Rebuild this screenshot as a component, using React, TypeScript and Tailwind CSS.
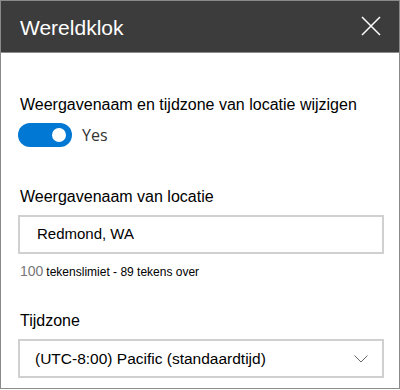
import React from "react";

const App: React.FC = () => {
    return (
        <div
            className="w-[400px] h-[389px] border border-[#8a8a8a] bg-white flex flex-col overflow-hidden"
            style={{ fontFamily: '"Liberation Sans", Arial, sans-serif' }}
        >
            <div className="h-[52px] bg-[#3c3c3c] border-b border-[#8a8a8a] flex items-center justify-between pl-[19px] pr-[18px] shrink-0">
                <span className="text-white text-[21px] leading-none mt-[2px]">Wereldklok</span>
                <svg width="20" height="20" viewBox="0 0 20 20" className="mt-[-2px]">
                    <path d="M1 1 L19 19 M19 1 L1 19" stroke="#ffffff" strokeWidth="1.5" fill="none" />
                </svg>
            </div>

            <div className="pl-[17px] pr-[15px] flex flex-col">
                <div className="mt-[42px] ml-[2px] text-[16px] leading-[20px] text-black">
                    Weergavenaam en tijdzone van locatie wijzigen
                </div>
                <div className="mt-[8px] flex items-center">
                    <div className="w-[54px] h-[24px] rounded-full bg-[#0078d4] flex items-center justify-end pr-[6px]">
                        <div className="w-[14px] h-[14px] rounded-full bg-white" />
                    </div>
                    <span
                        className="ml-[10px] text-[16px] text-[#333333]"
                        style={{ fontFamily: '"Open Sans", "Noto Sans", sans-serif' }}
                    >
                        Yes
                    </span>
                </div>

                <div className="mt-[40px] ml-[2px] text-[16px] leading-[20px] text-black">Weergavenaam van locatie</div>
                <div className="mt-[8px] h-[39px] border-2 border-[#d0d0d0] flex items-center pl-[17px] text-[15px] text-black">
                    Redmond, WA
                </div>
                <div className="mt-[7px] ml-[2px] flex items-baseline">
                    <span className="text-[14px] text-[#777777]">100</span>
                    <span className="ml-[3px] text-[12px] text-black">tekenslimiet - 89 tekens over</span>
                </div>

                <div className="mt-[29px] ml-[2px] text-[16px] leading-[20px] text-black">Tijdzone</div>
                <div className="mt-[8px] h-[39px] border-2 border-[#d0d0d0] flex items-center justify-between pl-[15px] pr-[14px] text-[15.5px] text-black">
                    <span>(UTC-8:00) Pacific (standaardtijd)</span>
                    <svg width="14" height="8" viewBox="0 0 14 8">
                        <path d="M0.5 0.5 L7 7 L13.5 0.5" stroke="#666666" strokeWidth="1" fill="none" />
                    </svg>
                </div>
            </div>
        </div>
    );
};

export default App;
